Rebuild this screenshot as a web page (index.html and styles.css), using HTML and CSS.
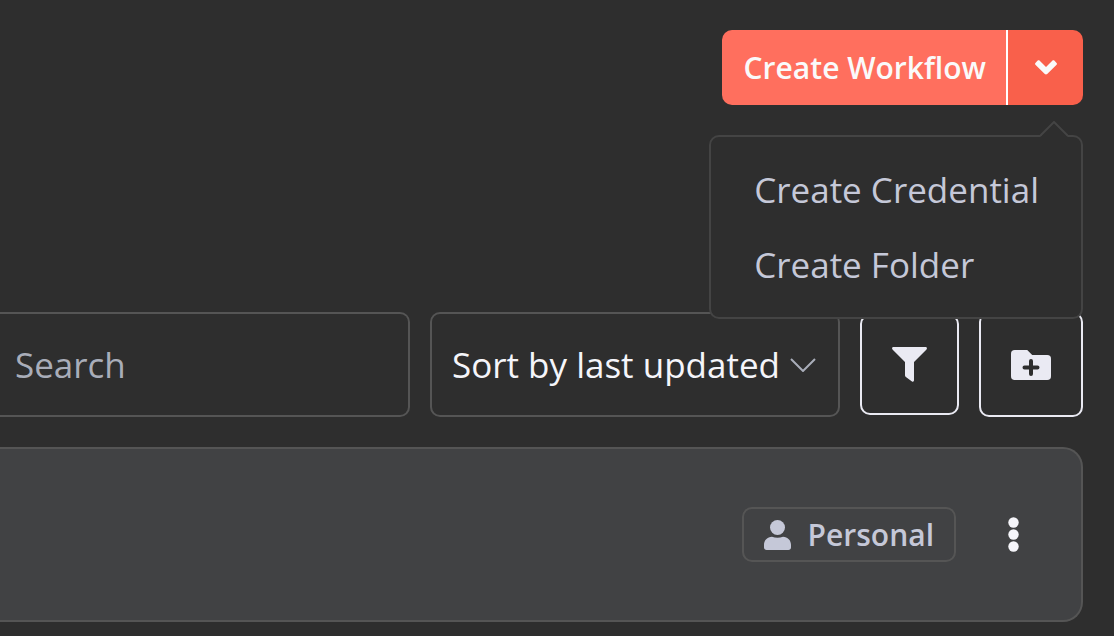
FILE: index.html
```html
<!DOCTYPE html>
<html lang="en">
<head>
<meta charset="utf-8">
<meta name="viewport" content="width=device-width, initial-scale=1">
<title>Workflows</title>
<link rel="stylesheet" href="styles.css">
</head>
<body>
<main class="page">
  <header class="header">
    <div class="split">
      <button class="split-main" type="button">Create Workflow</button>
      <button class="split-toggle" type="button" aria-label="More create options" aria-expanded="true">
        <svg width="22" height="15" viewBox="0 0 22 15" aria-hidden="true"><path d="M.4 3 2.700.6c.5-.5 1.300-.5 1.800 0L11 7.100 17.500.6c.5-.5 1.300-.5 1.800 0L21.600 3c.5.5.5 1.200 0 1.700l-9.400 9.300c-.7.600-1.700.600-2.400 0L.4 4.700C-.1 4.200-.1 3.500.4 3z" fill="currentColor"/></svg>
      </button>
      <div class="menu" role="menu">
        <svg class="menu-arrow" width="28" height="16" viewBox="0 0 28 16" aria-hidden="true"><path class="menu-arrow-fill" d="M0 16 14 1l14 15z"/><path class="menu-arrow-line" d="M0 15 14 1l14 14"/></svg>
        <button class="menu-item" type="button" role="menuitem">Create Credential</button>
        <button class="menu-item" type="button" role="menuitem">Create Folder</button>
      </div>
    </div>
  </header>

  <section class="toolbar" aria-label="Workflow list controls">
    <input class="search" type="search" placeholder="Search" aria-label="Search">
    <div class="sort">
      <select class="sort-select" aria-label="Sort order">
        <option>Sort by last updated</option>
        <option>Sort by last created</option>
      </select>
      <svg class="sort-chevron" width="26" height="14" viewBox="0 0 26 14" aria-hidden="true"><path d="M1 1l12 12L25 1"/></svg>
    </div>
    <button class="icon-button icon-button-filter" type="button" aria-label="Filter">
      <svg width="35" height="36" viewBox="0 0 35 36" aria-hidden="true"><path d="M1.500 0h32c1.400 0 1.900 1.500 1 2.400L22 15v18.300c0 1.300-1 1.800-2 1.100l-5.800-4.200c-.7-.5-1.200-1.100-1.200-2V15L.5 2.400C-.4 1.500.1 0 1.500 0z" fill="currentColor"/></svg>
    </button>
    <button class="icon-button icon-button-folder" type="button" aria-label="Add folder">
      <svg width="40" height="30" viewBox="0 0 40 30" aria-hidden="true"><path d="M3.750 0H16.200l5 5h15.050A3.750 3.750 0 0 1 40 8.750v17.500A3.750 3.750 0 0 1 36.250 30H3.750A3.750 3.750 0 0 1 0 26.250V3.750A3.750 3.750 0 0 1 3.750 0z" fill="currentColor"/><path class="folder-plus" d="M20 11v13M13.500 17.500h13"/></svg>
    </button>
  </section>

  <article class="card">
    <span class="badge">
      <svg width="27" height="30" viewBox="0 0 27 30" aria-hidden="true"><circle cx="13.500" cy="7.500" r="7.500" fill="currentColor"/><path d="M8 16.700c3.500 1.500 7.500 1.500 11 0 4.700.1 8 3.600 8 8V27.500c0 1.500-1.100 2.500-2.600 2.500H2.600C1.100 30 0 29 0 27.500V24.700c0-4.400 3.300-7.900 8-8z" fill="currentColor"/></svg>
      Personal
    </span>
    <button class="more" type="button" aria-label="More actions">
      <svg width="11" height="35" viewBox="0 0 11 35" aria-hidden="true" fill="currentColor"><circle cx="5.500" cy="5.500" r="5.200"/><circle cx="5.500" cy="17.500" r="5.200"/><circle cx="5.500" cy="29.500" r="5.200"/></svg>
    </button>
  </article>
</main>
</body>
</html>
```
FILE: styles.css
```css
:root {
  --bg: #2e2e2e;
  --line: #555555;
  --line-dark: #444444;
  --text: #f5f5fa;
  --text-soft: #c5c8d8;
  --light: #eaeaf3;
}

* {
  box-sizing: border-box;
}

body {
  margin: 0;
  background: var(--bg);
  color: var(--text);
  font-family: "Open Sans", "Noto Sans", sans-serif;
}

button,
input,
select {
  margin: 0;
  border: 0;
  background: none;
  color: inherit;
  font: inherit;
}

svg {
  display: block;
}

.page {
  padding: 30px 31px 14px 0;
}

.header {
  display: flex;
  justify-content: flex-end;
}

.split {
  position: relative;
  display: flex;
  height: 75px;
}

.split-main {
  padding: 0 20px 0 22px;
  border-right: 2px solid #ffffff;
  border-radius: 10px 0 0 10px;
  background: #ff6f5e;
  color: #fafafa;
  font-size: 30px;
  font-weight: 600;
}

.split-toggle {
  display: grid;
  place-items: center;
  width: 75px;
  padding: 0;
  border-radius: 0 10px 10px 0;
  background: #f9604b;
  color: #fafafa;
}

.menu {
  position: absolute;
  z-index: 1;
  top: 105px;
  right: 0;
  padding: 15px 0;
  border: 2px solid var(--line-dark);
  border-radius: 10px;
  background: var(--bg);
}

.menu-arrow {
  position: absolute;
  top: -16px;
  right: 13px;
}

.menu-arrow-fill {
  fill: var(--bg);
}

.menu-arrow-line {
  fill: none;
  stroke: var(--line-dark);
  stroke-width: 2;
}

.menu-item {
  display: block;
  width: 100%;
  height: 75px;
  padding: 0 42px 0 43px;
  color: var(--text-soft);
  font-size: 35px;
  text-align: left;
  white-space: nowrap;
}

.toolbar {
  display: flex;
  align-items: center;
  gap: 20px;
  margin-top: 207px;
}

.search {
  flex: 1;
  min-width: 0;
  height: 105px;
  padding: 0 15px;
  border: 2px solid var(--line);
  border-left: 0;
  border-radius: 0 10px 10px 0;
  font-size: 35px;
  appearance: none;
}

.search::placeholder {
  color: #a9adb9;
  opacity: 1;
}

.sort {
  position: relative;
  flex: 0 0 410px;
}

.sort-select {
  width: 100%;
  height: 105px;
  padding: 0 56px 0 20px;
  border: 2px solid var(--line);
  border-radius: 10px;
  font-size: 35px;
  appearance: none;
}

.sort-chevron {
  position: absolute;
  top: 46px;
  right: 24px;
  fill: none;
  stroke: #a9adb9;
  stroke-width: 2;
  pointer-events: none;
}

.icon-button {
  display: grid;
  place-items: center;
  padding: 0;
  border: 2px solid var(--light);
  border-radius: 10px;
  color: var(--light);
}

.icon-button-filter {
  width: 99px;
  height: 101px;
}

.icon-button-folder {
  width: 104px;
  height: 105px;
}

.folder-plus {
  fill: none;
  stroke: var(--bg);
  stroke-width: 4;
  stroke-linecap: round;
}

.card {
  display: flex;
  align-items: center;
  justify-content: flex-end;
  gap: 40px;
  min-height: 175px;
  margin-top: 30px;
  padding: 20px 50px;
  border: 2px solid var(--line);
  border-left: 0;
  border-radius: 0 20px 20px 0;
  background: #414244;
}

.badge {
  display: flex;
  align-items: center;
  gap: 17px;
  height: 55px;
  padding: 0 20px;
  border: 2px solid var(--line);
  border-radius: 10px;
  color: var(--text-soft);
  font-size: 30px;
  font-weight: 600;
}

.more {
  display: grid;
  place-items: center;
  width: 35px;
  height: 55px;
  padding: 0;
}
```
